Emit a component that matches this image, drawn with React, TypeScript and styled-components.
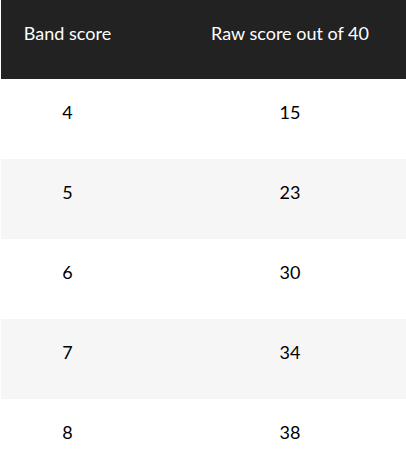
import React from 'react';
import styled, { createGlobalStyle } from 'styled-components';

const GlobalStyle = createGlobalStyle`
  html, body {
    margin: 0;
    padding: 0;
    background: #ffffff;
  }
  body {
    font-family: Lato, "Liberation Sans", sans-serif;
  }
`;

const Page = styled.div`
  width: 406px;
  height: 464px;
  overflow: hidden;
  padding-left: 1px;
  box-sizing: border-box;
`;

const Table = styled.div`
  display: flex;
  flex-direction: column;
`;

const Row = styled.div<{ $head?: boolean; $shade?: boolean }>`
  display: grid;
  grid-template-columns: 133px 1fr;
  height: ${({ $head }) => ($head ? '79px' : '80px')};
  background: ${({ $head, $shade }) => ($head ? '#222222' : $shade ? '#f6f6f6' : '#ffffff')};
  color: ${({ $head }) => ($head ? '#ffffff' : '#000000')};
`;

const Cell = styled.div<{ $second?: boolean }>`
  text-align: center;
  font-size: 18px;
  line-height: 24px;
  padding-top: ${({ $second }) => ($second ? '21px' : '21px')};
  padding-left: ${({ $second }) => ($second ? '40px' : '0')};
  box-sizing: border-box;
`;

const rows = [
  ['4', '15'],
  ['5', '23'],
  ['6', '30'],
  ['7', '34'],
  ['8', '38'],
];

export default function App() {
  return (
    <>
      <GlobalStyle />
      <Page>
        <Table>
          <Row $head>
            <Cell>Band score</Cell>
            <Cell $second>Raw score out of 40</Cell>
          </Row>
          {rows.map(([band, raw], i) => (
            <Row key={band} $shade={i % 2 === 1}>
              <Cell>{band}</Cell>
              <Cell $second>{raw}</Cell>
            </Row>
          ))}
        </Table>
      </Page>
    </>
  );
}
